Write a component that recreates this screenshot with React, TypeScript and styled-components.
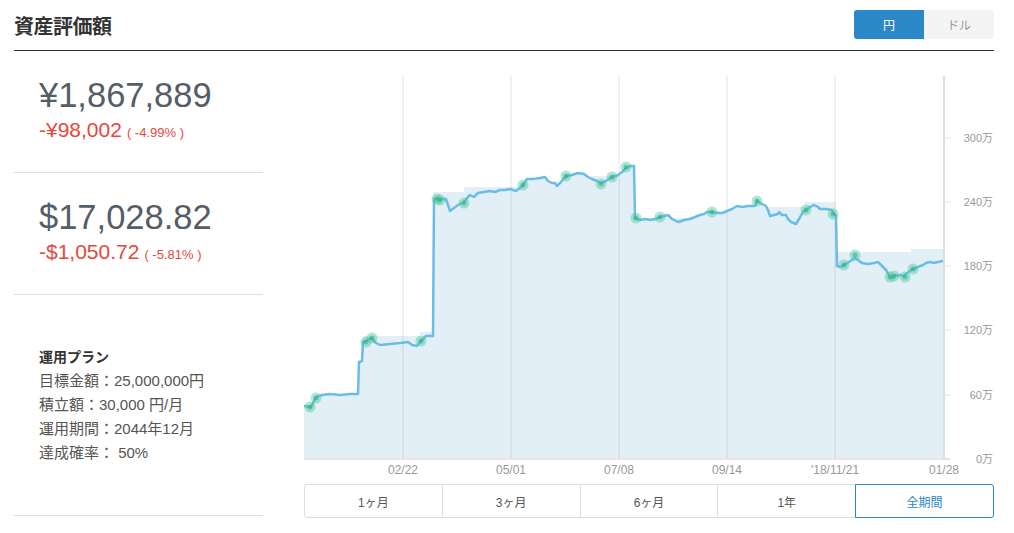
import React, {FC} from 'react';
import styled, {createGlobalStyle, css} from 'styled-components';

const blue = '#2a87c8';
const text = '#555d66';
const red = '#e8473a';
const font = `"Liberation Sans", "Noto Sans CJK JP", sans-serif`;

const Global = createGlobalStyle`
  body {
    margin: 0;
    background: #fff;
    font-family: ${font};
  }
`;

const Page = styled.div`
  width: 980px;
  padding: 0 20px 0 14px;
`;

const Header = styled.div`
  display: flex;
  align-items: center;
  justify-content: space-between;
  height: 50px;
  border-bottom: 1px solid #333;
`;

const Title = styled.h1`
  margin: 0;
  font-size: 20px;
  font-weight: bold;
  color: #333;
  letter-spacing: -0.5px;
`;

const Toggle = styled.div`
  display: flex;
  border-radius: 3px;
  overflow: hidden;
  margin-bottom: 2px;
`;

const ToggleButton = styled.div<{$active?: boolean}>`
  width: 70px;
  height: 29px;
  display: flex;
  align-items: center;
  justify-content: center;
  font-size: 12px;
  ${p => p.$active ? css`
    background: ${blue};
    color: #fff;
  ` : css`
    background: #f4f4f4;
    color: #999;
  `}
`;

const Main = styled.div`
  display: flex;
  gap: 41px;
`;

const Side = styled.div`
  width: 249px;
  flex-shrink: 0;
`;

const Block = styled.div<{$plan?: boolean}>`
  border-bottom: 1px solid #ddd;
  padding: ${p => p.$plan ? '50px 0 50px 25px' : '24px 0 26px 25px'};
`;

const Amount = styled.div`
  font-size: 34.5px;
  line-height: 40px;
  color: ${text};
`;

const Change = styled.div`
  margin-top: 2px;
  font-size: 21px;
  line-height: 26px;
  color: ${red};
`;

const Rate = styled.span`
  font-size: 13px;
  margin-left: 5px;
`;

const PlanTitle = styled.div`
  font-size: 14px;
  font-weight: bold;
  line-height: 24px;
  color: #333;
`;

const PlanRow = styled.div`
  font-size: 15px;
  line-height: 24px;
  color: #555;
`;

const ChartArea = styled.div`
  flex: 1;
  padding-top: 9px;
`;

const Svg = styled.svg`
  display: block;
  margin-bottom: 6px;
`;

const Periods = styled.div`
  display: flex;
`;

const Period = styled.div<{$active?: boolean}>`
  flex: 1;
  height: 32px;
  display: flex;
  align-items: center;
  justify-content: center;
  font-size: 12px;
  color: #555;
  border: 1px solid #ddd;
  margin-left: -1px;
  &:first-child {
    margin-left: 0;
    border-radius: 3px 0 0 3px;
  }
  &:last-child {
    border-radius: 0 3px 3px 0;
  }
  ${p => p.$active && css`
    border-color: ${blue};
    color: ${blue};
    position: relative;
  `}
`;

// page coordinates, shifted into the svg below
const OX = 304;
const OY = 60;

const line: [number, number][] = [
  [304, 406], [311, 407], [316, 397], [322, 395], [330, 394], [340, 395], [350, 394], [358, 394],
  [359, 362], [362, 361], [363, 342], [366, 341], [371, 338], [376, 343], [380, 345], [390, 344],
  [400, 343], [408, 342], [412, 345], [417, 346], [421, 341], [426, 336], [433, 336], [434, 199],
  [437, 199], [446, 199], [448, 205], [450, 211], [454, 208], [458, 205], [464, 202], [468, 197],
  [470, 195], [474, 197], [478, 193], [484, 192], [490, 191], [495, 192], [500, 190], [505, 190],
  [510, 189], [516, 191], [521, 187], [523, 185], [527, 179], [533, 179], [540, 178], [545, 177],
  [548, 181], [552, 183], [555, 183], [557, 186], [560, 183], [566, 176], [572, 175], [578, 173],
  [584, 174], [588, 177], [592, 179], [597, 181], [601, 183], [606, 181], [612, 177], [618, 175],
  [622, 172], [626, 168], [630, 166], [634, 166], [635, 218], [640, 220], [645, 219], [650, 220],
  [655, 219], [660, 217], [664, 216], [668, 215], [672, 219], [676, 221], [679, 222], [684, 220],
  [690, 219], [695, 217], [700, 215], [704, 214], [707, 212], [712, 212], [718, 213], [722, 213],
  [727, 211], [732, 209], [737, 206], [742, 207], [748, 206], [755, 206], [757, 201], [762, 204],
  [766, 206], [768, 210], [770, 216], [774, 215], [778, 214], [779, 212], [782, 215], [786, 215],
  [788, 219], [791, 222], [796, 224], [799, 219], [803, 212], [806, 210], [810, 207], [814, 205],
  [818, 207], [820, 209], [826, 209], [832, 210], [834, 214], [836, 215], [837, 266], [840, 267],
  [844, 265], [849, 262], [855, 258], [858, 260], [862, 263], [868, 264], [874, 263], [878, 262],
  [882, 266], [886, 270], [889, 275], [891, 278], [894, 276], [900, 275], [904, 276], [907, 273],
  [913, 269], [918, 267], [923, 265], [926, 263], [930, 262], [934, 263], [938, 262], [943, 261],
];

const steps: [number, number][] = [
  [363, 336], [420, 336], [420, 332], [433, 332], [433, 192], [464, 192], [464, 187], [590, 187],
  [590, 176], [620, 176], [620, 218], [727, 218], [727, 212], [767, 212], [767, 207], [805, 207],
  [805, 202], [836, 202], [836, 252], [911, 252], [911, 249], [944, 249],
];

const dots: [number, number][] = [
  [310, 407], [316, 398], [366, 342], [372, 338], [421, 341], [437, 199], [440, 200], [464, 203],
  [523, 185], [566, 176], [601, 184], [612, 177], [626, 167], [636, 218], [660, 217], [712, 212],
  [757, 201], [806, 210], [833, 214], [844, 265], [855, 255], [890, 277], [894, 276], [905, 277],
  [913, 269],
];

const grid = [
  {x: 403, label: '02/22'},
  {x: 511, label: '05/01'},
  {x: 619, label: '07/08'},
  {x: 727, label: '09/14'},
  {x: 835, label: "'18/11/21"},
];

const yTicks = [
  {y: 138, label: '300万'},
  {y: 202, label: '240万'},
  {y: 266, label: '180万'},
  {y: 330, label: '120万'},
  {y: 395, label: '60万'},
  {y: 459, label: '0万'},
];

const pts = (list: [number, number][]) => list.map(([x, y]) => `${x - OX},${y - OY}`).join(' ');

const BOTTOM = 459;

const Chart: FC = () => (
  <Svg width={690} height={418} viewBox="0 0 690 418">
    <polygon points={pts([[304, BOTTOM], ...line, [944, 261], [944, BOTTOM]])} fill="#e3eff6"/>
    <polygon points={pts([[363, BOTTOM], ...steps, [944, BOTTOM]])} fill="#e3eff6"/>
    {grid.map(g => (
      <line key={g.x} x1={g.x - OX} x2={g.x - OX} y1={76 - OY} y2={BOTTOM - OY} stroke="rgba(0,0,0,0.1)" strokeWidth={1}/>
    ))}
    <line x1={0} x2={646} y1={BOTTOM - OY} y2={BOTTOM - OY} stroke="#e6e6e6" strokeWidth={2}/>
    <line x1={944 - OX} x2={944 - OX} y1={76 - OY} y2={BOTTOM - OY} stroke="#dedede" strokeWidth={2}/>
    {yTicks.map(t => (
      <g key={t.label}>
        <line x1={944 - OX} x2={950 - OX} y1={t.y - OY} y2={t.y - OY} stroke="#dedede" strokeWidth={1}/>
        <text x={689} y={t.y - OY + 4} textAnchor="end" fontSize={11} fill="#999" fontFamily={font}>{t.label}</text>
      </g>
    ))}
    {grid.map(g => (
      <text key={g.label} x={g.x - OX} y={474 - OY} textAnchor="middle" fontSize={12} fill="#999" fontFamily={font}>{g.label}</text>
    ))}
    <text x={944 - OX} y={474 - OY} textAnchor="middle" fontSize={12} fill="#999" fontFamily={font}>01/28</text>
    <polyline points={pts(line)} fill="none" stroke="#6bbde9" strokeWidth={2.5} strokeLinejoin="round"/>
    {dots.map(([x, y], i) => (
      <g key={i}>
        <circle cx={x - OX} cy={y - OY} r={5.5} fill="rgba(78,200,160,0.45)"/>
        <circle cx={x - OX} cy={y - OY} r={2.5} fill="rgba(40,170,130,0.5)"/>
      </g>
    ))}
  </Svg>
);

export default function App() {
  return (
    <Page>
      <Global/>
      <Header>
        <Title>資産評価額</Title>
        <Toggle>
          <ToggleButton $active>円</ToggleButton>
          <ToggleButton>ドル</ToggleButton>
        </Toggle>
      </Header>
      <Main>
        <Side>
          <Block>
            <Amount>¥1,867,889</Amount>
            <Change>-¥98,002<Rate>( -4.99% )</Rate></Change>
          </Block>
          <Block>
            <Amount>$17,028.82</Amount>
            <Change>-$1,050.72<Rate>( -5.81% )</Rate></Change>
          </Block>
          <Block $plan>
            <PlanTitle>運用プラン</PlanTitle>
            <PlanRow>目標金額：25,000,000円</PlanRow>
            <PlanRow>積立額：30,000 円/月</PlanRow>
            <PlanRow>運用期間：2044年12月</PlanRow>
            <PlanRow>達成確率： 50%</PlanRow>
          </Block>
        </Side>
        <ChartArea>
          <Chart/>
          <Periods>
            <Period>1ヶ月</Period>
            <Period>3ヶ月</Period>
            <Period>6ヶ月</Period>
            <Period>1年</Period>
            <Period $active>全期間</Period>
          </Periods>
        </ChartArea>
      </Main>
    </Page>
  );
}
